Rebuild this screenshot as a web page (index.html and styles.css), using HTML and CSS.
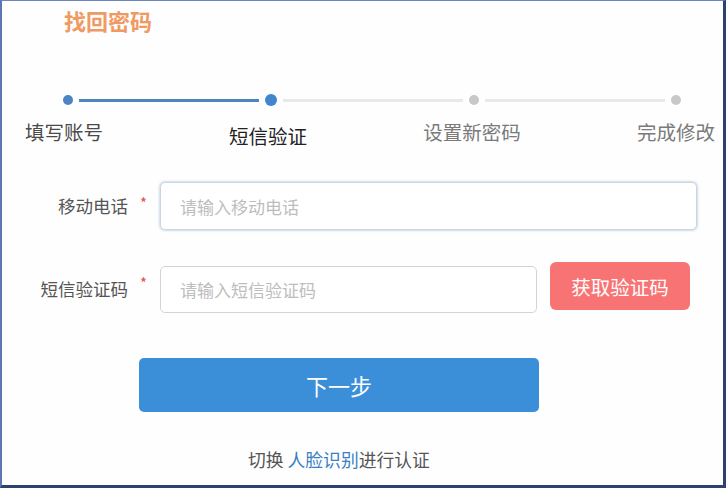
FILE: index.html
```html
<!DOCTYPE html>
<html lang="zh-CN">
<head>
<meta charset="utf-8">
<title>找回密码</title>
<link rel="stylesheet" href="styles.css">
</head>
<body>
<div class="frame">
  <h1 class="title">找回密码</h1>

  <div class="track">
    <span class="dot done"></span>
    <span class="line done"></span>
    <span class="dot current"></span>
    <span class="line"></span>
    <span class="dot"></span>
    <span class="line"></span>
    <span class="dot"></span>
  </div>
  <div class="labels">
    <span class="label done">填写账号</span>
    <span class="label current">短信验证</span>
    <span class="label">设置新密码</span>
    <span class="label">完成修改</span>
  </div>

  <div class="row row-phone">
    <label class="field-label">移动电话</label>
    <span class="req">*</span>
    <input class="input input-phone" type="text" placeholder="请输入移动电话">
  </div>
  <div class="row row-code">
    <label class="field-label">短信验证码</label>
    <span class="req">*</span>
    <input class="input input-code" type="text" placeholder="请输入短信验证码">
    <button class="btn-code" type="button">获取验证码</button>
  </div>

  <button class="btn-next" type="button">下一步</button>

  <p class="switch">切换 <a class="switch-link">人脸识别</a>进行认证</p>
</div>
</body>
</html>
```

FILE: styles.css
```css
* { box-sizing: border-box; }
html, body { margin: 0; padding: 0; }
body {
  width: 726px;
  height: 488px;
  overflow: hidden;
  font-family: "Noto Sans CJK SC", "Microsoft YaHei", sans-serif;
  background: #fff;
}
.frame {
  width: 726px;
  height: 488px;
  border-top: 1px solid #6a86bd;
  border-left: 2px solid #5877b4;
  border-right: 3px solid #2e426f;
  border-bottom: 3px solid #2e426f;
  background: #fefefe;
  display: flex;
  flex-direction: column;
  overflow: hidden;
}
.title {
  margin: 7px 0 0 62px;
  font-size: 22px;
  line-height: 24px;
  font-weight: 700;
  color: #f09a63;
}
.track {
  margin: 62px 0 0 61px;
  height: 12px;
  display: flex;
  align-items: center;
  gap: 6px;
}
.dot {
  width: 10px;
  height: 10px;
  border-radius: 50%;
  background: #c8c8c8;
  flex: none;
}
.dot.done { background: #4a85c2; }
.dot.current { width: 12px; height: 12px; background: #3f86cf; }
.line {
  width: 180px;
  height: 3px;
  background: #e9e9ea;
  flex: none;
}
.line.done { background: #4d86b8; }

.labels {
  margin: 14px 0 0 17px;
  display: flex;
  gap: 114px;
  height: 26px;
}
.label {
  width: 90px;
  display: flex;
  justify-content: center;
  font-size: 19.5px;
  line-height: 24px;
  color: #7a7a7a;
  white-space: nowrap;
  flex: none;
}
.label.done { color: #4a4a4a; }
.label.current { color: #222; margin-top: 4px; }

.row {
  display: flex;
  align-items: center;
}
.row-phone { margin-top: 36px; }
.row-code { margin-top: 32px; align-items: flex-start; }

.field-label {
  width: 126px;
  text-align: right;
  font-size: 17.5px;
  line-height: 48px;
  color: #555;
  flex: none;
}
.row-code .field-label { margin-top: 3px; }
.req {
  width: 32px;
  padding-left: 12px;
  color: #e0504f;
  font-size: 15px;
  line-height: 48px;
  margin-top: -6px;
  flex: none;
}
.row-code .req { margin-top: -3px; }

.input {
  height: 48px;
  border: 1px solid #cbd6e2;
  border-radius: 5px;
  padding: 0 0 0 19px;
  font-family: inherit;
  font-size: 17px;
  color: #333;
  background: #fff;
  outline: none;
  flex: none;
}
.input::placeholder { color: #bdbdbd; }
.input-phone {
  width: 537px;
  box-shadow: 0 0 2px 1px rgba(170, 195, 220, 0.55);
}
.input-code {
  width: 377px;
  height: 47px;
  margin-top: 4px;
  border-color: #d4d4d4;
}
.btn-code {
  margin-left: 13px;
  width: 140px;
  height: 48px;
  border: none;
  border-radius: 6px;
  background: #f87474;
  color: #fff;
  font-family: inherit;
  font-size: 19.5px;
  padding: 0;
  flex: none;
}

.btn-next {
  margin: 45px 0 0 137px;
  width: 400px;
  height: 54px;
  border: none;
  border-radius: 5px;
  background: #3b8fd9;
  color: #fff;
  font-family: inherit;
  font-size: 22px;
  padding: 0;
  align-self: flex-start;
}

.switch {
  margin: 35px 0 0 0;
  padding-left: 246px;
  font-size: 17.8px;
  line-height: 24px;
  color: #555;
  white-space: nowrap;
}
.switch-link { color: #3a7fc2; }
```
